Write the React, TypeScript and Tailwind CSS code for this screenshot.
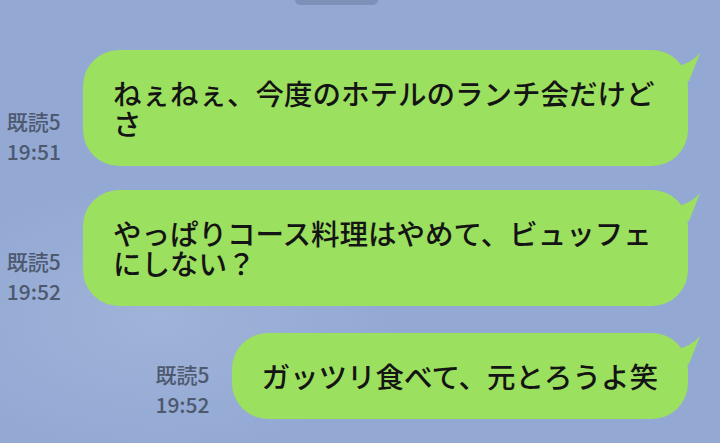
import React from "react";

const FONT = '"Noto Sans CJK JP", "Noto Sans", sans-serif';

function Tail() {
  return (
    <svg
      className="absolute right-[-14px] top-0"
      width="30"
      height="34"
      viewBox="0 0 30 34"
      aria-hidden
    >
      <path d="M2 17 Q19 14 28 3 Q23 16 17 31 L2 31 Z" fill="#9ce05f" />
    </svg>
  );
}

function Row({
  text,
  time,
  className,
}: {
  text: string;
  time: string;
  className?: string;
}) {
  return (
    <div className={"flex justify-end items-end gap-[22px] pr-[32px] " + (className ?? "")}>
      <div className="flex flex-col text-[21px] leading-[30px] font-medium text-[#4d596f] shrink-0">
        <span>既読5</span>
        <span>{time}</span>
      </div>
      <div className="relative max-w-[605px] rounded-[36px] bg-[#9ce05f] px-[30px] py-[28px] text-[28.5px] leading-[30px] font-medium text-[#141414]">
        <Tail />
        <span className="relative">{text}</span>
      </div>
    </div>
  );
}

export default function App() {
  return (
    <div
      className="w-[720px] h-[443px] overflow-hidden bg-[#93a9d4] bg-[radial-gradient(ellipse_at_22%_72%,#a0b3d8_0%,#93a9d4_30%)]"
      style={{ fontFamily: FONT }}
    >
      <div className="ml-[295px] w-[83px] h-[5px] rounded-b-[6px] bg-[#7d91b8]" />
      <Row
        className="mt-[45px]"
        text="ねぇねぇ、今度のホテルのランチ会だけどさ"
        time="19:51"
      />
      <Row
        className="mt-[24px]"
        text="やっぱりコース料理はやめて、ビュッフェにしない？"
        time="19:52"
      />
      <Row
        className="mt-[27px]"
        text="ガッツリ食べて、元とろうよ笑"
        time="19:52"
      />
    </div>
  );
}
